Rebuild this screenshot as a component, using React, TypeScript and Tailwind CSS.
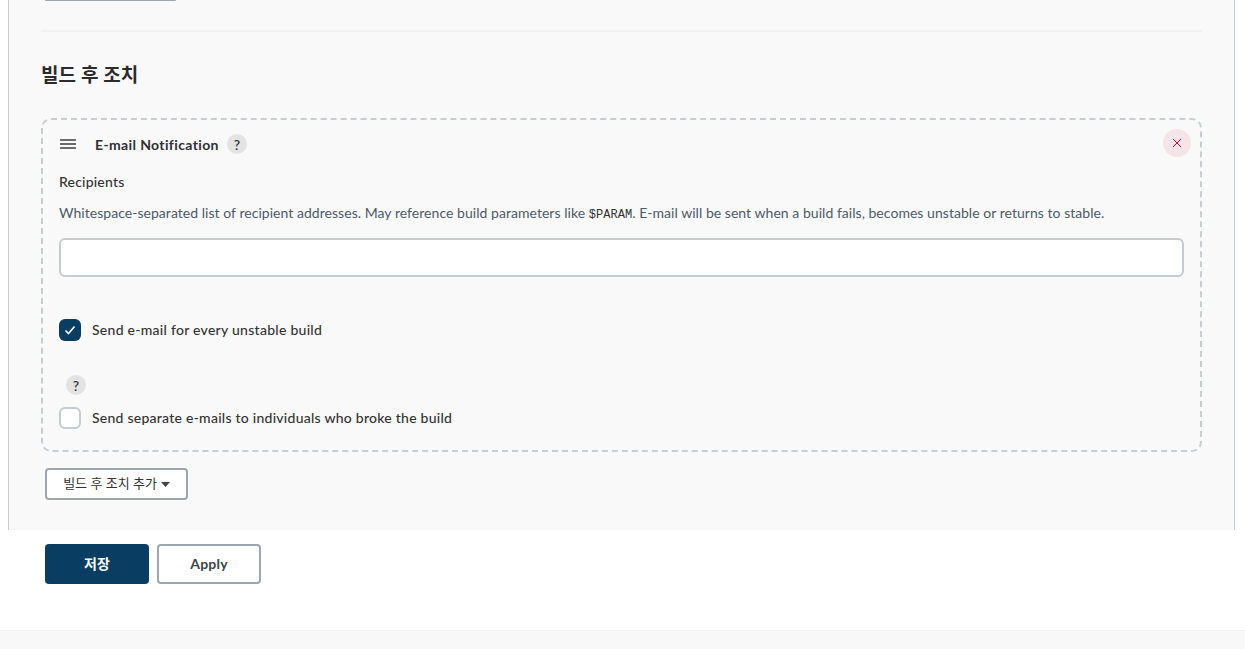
import React from 'react';

const sans = 'Lato, "Noto Sans CJK KR", sans-serif';

const HelpBadge = () => (
  <span className="flex h-5 w-5 items-center justify-center rounded-full bg-[#e3e3e3] text-[14px] font-semibold text-[#3a3a3a]">?</span>
);

export default function App() {
  return (
    <div className="flex h-[649px] flex-col overflow-hidden bg-white text-[#333]" style={{ fontFamily: sans }}>
      <div className="ml-2 mr-[10px] flex h-[530px] flex-col border-x border-[#c3ccd1] bg-[#f9f9f9] pl-8 pr-8">
        <div className="ml-1 h-px w-[131px] rounded-b bg-[#9aa7b0]" />
        <div className="mt-[29px] h-0.5 bg-[#f2f2f2]" />
        <h2 className="mt-[29px] h-[28px] text-[19px] font-bold leading-[28px] tracking-[0.1px] text-[#2b2b2b]">빌드 후 조치</h2>

        <div className="mt-[29px] flex h-[334px] flex-col rounded-[10px] border-2 border-dashed border-[#c6ced2] pl-4 pr-4">
          <div className="flex h-[48px] items-center justify-between">
            <div className="flex items-center">
              <svg width="16" height="10" viewBox="0 0 16 10" className="ml-[1px]">
                <path d="M0 1h16M0 5h16M0 9h16" stroke="#3f3f3f" strokeWidth="1.5" />
              </svg>
              <span className="ml-[19px] text-[14px] font-bold tracking-[0.37px] text-[#2f2f35]">E-mail Notification</span>
              <span className="ml-2"><HelpBadge /></span>
            </div>
            <button className="-mr-[7px] mb-[2px] flex h-7 w-7 items-center justify-center rounded-full bg-[#f6e5e8]">
              <svg width="10" height="10" viewBox="0 0 10 10">
                <path d="M1 1l8 8M9 1l-8 8" stroke="#e6002e" strokeWidth="1" />
              </svg>
            </button>
          </div>

          <div className="mt-[4px] text-[14px] font-medium leading-[20px] tracking-[0.2px] text-[#333]">Recipients</div>
          <p className="mt-[11px] text-[14px] leading-[20px] tracking-[0.04px] text-[#4c5a68]">
            Whitespace-separated list of recipient addresses. May reference build parameters like{' '}
            <code className="text-[12px] text-[#333]" style={{ fontFamily: '"Liberation Mono", monospace' }}>$PARAM</code>
            . E-mail will be sent when a build fails, becomes unstable or returns to stable.
          </p>
          <input className="mt-[13px] h-[39px] w-[1125px] rounded-md border-2 border-[#c3ccd1] bg-white" />

          <label className="mt-[42px] flex h-[22px] items-center">
            <span className="flex h-[22px] w-[22px] items-center justify-center rounded-md bg-[#0a3d62]">
              <svg width="12" height="10" viewBox="0 0 12 10">
                <path d="M1.5 5.5l3 3 6-7" fill="none" stroke="white" strokeWidth="1.6" />
              </svg>
            </span>
            <span className="ml-[11px] pb-[2px] text-[14px] font-medium tracking-[0.27px] text-[#333]">Send e-mail for every unstable build</span>
          </label>

          <div className="ml-[7px] mt-[34px]"><HelpBadge /></div>

          <label className="mt-[12px] flex h-[22px] items-center">
            <span className="h-[22px] w-[22px] rounded-md border-2 border-[#c3ccd1] bg-white" />
            <span className="ml-[11px] pb-[2px] text-[14px] font-medium tracking-[0.25px] text-[#333]">Send separate e-mails to individuals who broke the build</span>
          </label>
        </div>

        <button className="ml-1 mt-4 flex h-8 w-[143px] items-center justify-center gap-1 rounded border-2 border-[#9aa7b0] bg-white text-[13px] text-[#333]">
          빌드 후 조치 추가
          <svg width="9" height="5" viewBox="0 0 9 5"><path d="M0 0h9L4.5 5z" fill="#444" /></svg>
        </button>
      </div>

      <div className="ml-[45px] mt-[14px] flex gap-2">
        <button className="h-10 w-[104px] rounded bg-[#0a3d62] pb-[2px] text-[14px] font-bold text-white">저장</button>
        <button className="h-10 w-[104px] rounded border-2 border-[#9aa7b0] bg-white pb-[1px] text-[14px] font-bold tracking-[0.2px] text-[#3c4449]">Apply</button>
      </div>

      <div className="mt-[46px] h-[19px] border-t border-[#f0f0f0] bg-[#f8f8f8]" />
    </div>
  );
}
